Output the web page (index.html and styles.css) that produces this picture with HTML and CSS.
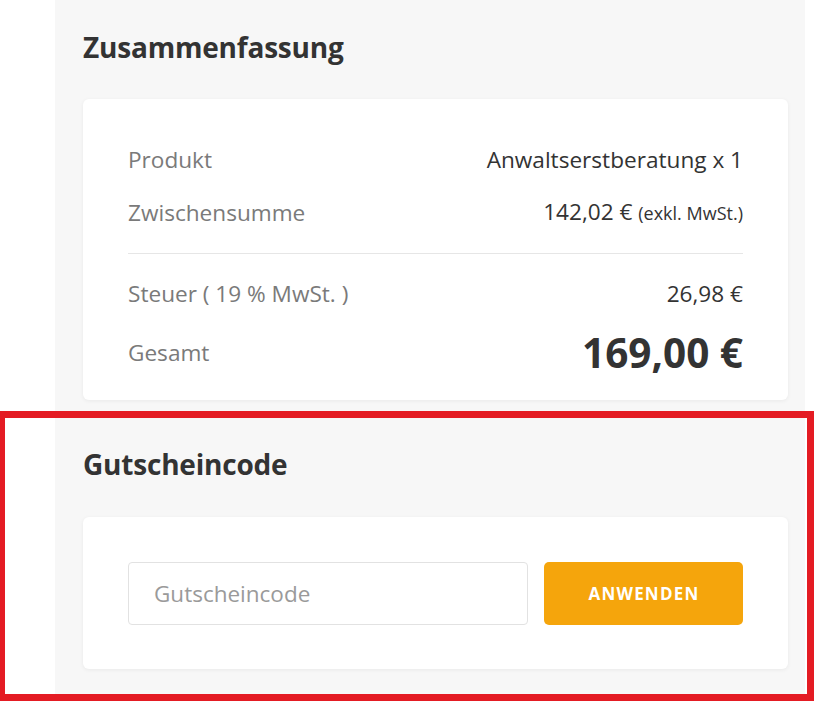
FILE: index.html
```html
<!DOCTYPE html>
<html lang="de">
<head>
<meta charset="utf-8">
<title>Zusammenfassung</title>
<link rel="stylesheet" href="styles.css">
</head>
<body>
<div class="page">
  <main class="panel">
    <h2 class="section-title first">Zusammenfassung</h2>
    <section class="card summary">
      <div class="group">
        <div class="row">
          <span class="label">Produkt</span>
          <span class="value">Anwaltserstberatung x 1</span>
        </div>
        <div class="row">
          <span class="label">Zwischensumme</span>
          <span class="value">142,02 € <small class="note">(exkl. MwSt.)</small></span>
        </div>
      </div>
      <hr class="divider">
      <div class="group tight">
        <div class="row">
          <span class="label">Steuer ( 19 % MwSt. )</span>
          <span class="value">26,98 €</span>
        </div>
        <div class="row total-row">
          <span class="label">Gesamt</span>
          <span class="total">169,00 €</span>
        </div>
      </div>
    </section>

    <h2 class="section-title">Gutscheincode</h2>
    <section class="card coupon">
      <input class="coupon-input" type="text" placeholder="Gutscheincode">
      <button class="apply-btn" type="button">ANWENDEN</button>
    </section>
  </main>
  <div class="highlight"></div>
</div>
</body>
</html>
```
FILE: styles.css
```css
html, body {
  margin: 0;
  padding: 0;
  height: 100%;
  overflow: hidden;
  background: #ffffff;
}

body {
  font-family: "Open Sans", "Noto Sans", sans-serif;
  color: #333333;
}

.page {
  position: relative;
  height: 100%;
  padding-left: 55px;
  box-sizing: border-box;
}

.panel {
  width: 750px;
  min-height: 100%;
  box-sizing: border-box;
  background: #f7f7f7;
  padding: 0 17px 0 28px;
  display: flex;
  flex-direction: column;
}

.section-title {
  margin: 46px 0 35px;
  font-size: 28px;
  line-height: 36px;
  font-weight: 700;
  letter-spacing: -0.2px;
  color: #333333;
}

.section-title.first {
  margin-top: 29px;
  margin-bottom: 34px;
}

.card {
  background: #ffffff;
  border-radius: 6px;
  box-shadow: 0 1px 4px rgba(0, 0, 0, 0.06);
  padding: 0 45px;
}

.summary {
  padding-top: 46px;
  padding-bottom: 23px;
}

.group {
  display: flex;
  flex-direction: column;
  gap: 22px;
}

.group.tight {
  gap: 20px;
}

.row {
  display: flex;
  justify-content: space-between;
  align-items: center;
  font-size: 22.6px;
  line-height: 30px;
}

.label {
  color: #7a7a7a;
}

.value {
  color: #333333;
}

.note {
  font-size: 18px;
  color: #333333;
}

.divider {
  border: 0;
  border-top: 1px solid #e6e6e6;
  margin: 25px 0 25px;
}

.total-row {
  line-height: 48px;
}

.total {
  font-size: 40.5px;
  line-height: 48px;
  font-weight: 700;
  color: #333333;
}

.coupon {
  padding-top: 45px;
  padding-bottom: 44px;
  display: flex;
  gap: 16px;
}

.coupon-input {
  width: 400px;
  height: 63px;
  box-sizing: border-box;
  border: 1px solid #e2e2e2;
  border-radius: 4px;
  padding: 0 25px;
  font-family: "Open Sans", "Noto Sans", sans-serif;
  font-size: 22.5px;
  color: #333333;
  background: #ffffff;
  outline: none;
}

.coupon-input::placeholder {
  color: #9a9a9a;
}

.apply-btn {
  flex: 1;
  height: 63px;
  border: 0;
  border-radius: 5px;
  background: #f5a50c;
  color: #ffffff;
  font-family: "Open Sans", "Noto Sans", sans-serif;
  font-size: 17px;
  font-weight: 700;
  letter-spacing: 1.2px;
  padding: 0 0 0 1px;
  cursor: pointer;
}

.highlight {
  position: absolute;
  top: 411px;
  left: -2px;
  width: 816px;
  height: 290px;
  box-sizing: border-box;
  border: 7px solid #e41b23;
  pointer-events: none;
}
```
